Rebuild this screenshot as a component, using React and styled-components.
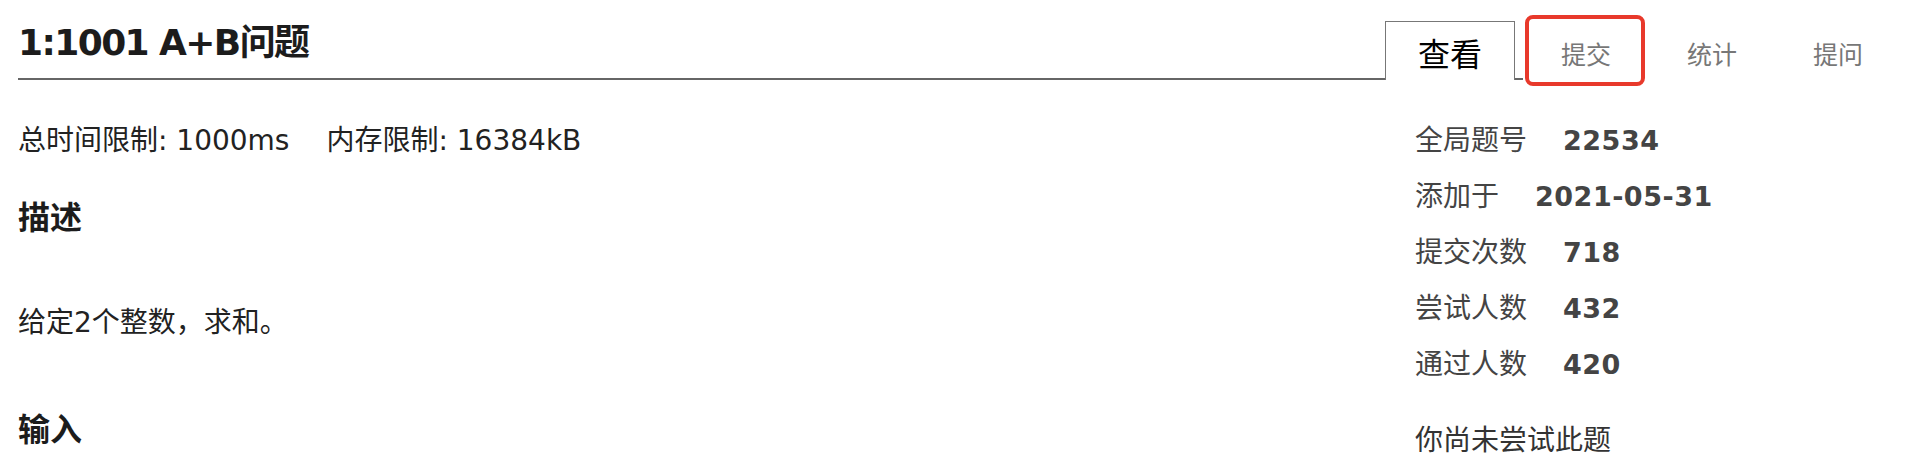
import styled, { createGlobalStyle } from 'styled-components'

const GlobalStyle = createGlobalStyle`
  body {
    margin: 0;
    background: #fff;
    color: #222;
    font-family: "Noto Sans", "Noto Sans CJK SC", sans-serif;
  }
`

const latin = '"DejaVu Sans", "Noto Sans CJK SC", sans-serif'

const tabs = [
  { label: '查看', active: true },
  { label: '提交', marked: true },
  { label: '统计' },
  { label: '提问' },
]

const stats = [
  ['全局题号', '22534'],
  ['添加于', '2021-05-31'],
  ['提交次数', '718'],
  ['尝试人数', '432'],
  ['通过人数', '420'],
]

export default function App() {
  return (
    <Page>
      <GlobalStyle />
      <Header>
        <Title>1:1001 A+B问题</Title>
        <TabList>
          {tabs.map(tab => (
            <Tab key={tab.label} $active={tab.active}>
              {tab.label}
              {tab.marked ? <Mark /> : null}
            </Tab>
          ))}
        </TabList>
      </Header>
      <Main>
        <Content>
          <Limits>
            <span>总时间限制: 1000ms</span>
            <span>内存限制: 16384kB</span>
          </Limits>
          <SectionTitle>描述</SectionTitle>
          <Text>给定2个整数，求和。</Text>
          <SectionTitle $gap>输入</SectionTitle>
        </Content>
        <Side>
          {stats.map(([label, value]) => (
            <StatRow key={label}>
              {label}
              <StatValue>{value}</StatValue>
            </StatRow>
          ))}
          <Status>你尚未尝试此题</Status>
        </Side>
      </Main>
    </Page>
  )
}

const Page = styled.div`
  padding: 0 40px 0 18px;
  height: 474px;
  overflow: hidden;
  box-sizing: border-box;
`
const Header = styled.header`
  display: flex;
  align-items: flex-end;
  height: 78px;
  border-bottom: 2px solid #666;
`
const Title = styled.h1`
  flex: 1;
  margin: 0 0 17px 0;
  font-family: ${latin};
  font-size: 36px;
  line-height: 36px;
  font-weight: 700;
  letter-spacing: -1.6px;
  color: #1c1c1c;
`
const TabList = styled.ul`
  display: flex;
  flex-shrink: 0;
  align-items: flex-end;
  width: 516px;
  margin: 0 -19px -2px 0;
  padding: 0;
  list-style: none;
`
const Tab = styled.li`
  position: relative;
  display: flex;
  align-items: center;
  justify-content: center;
  box-sizing: border-box;
  height: 59px;
  padding: ${props => props.$active ? '2px 0 0' : '4px 38px 0'};
  width: ${props => props.$active ? '130px' : 'auto'};
  margin-right: ${props => props.$active ? '8px' : '0'};
  background: #fff;
  border: ${props => props.$active ? '1px solid #777' : 'none'};
  border-bottom: none;
  font-size: ${props => props.$active ? '32px' : '25px'};
  color: ${props => props.$active ? '#000' : '#777'};
`
const Mark = styled.span`
  position: absolute;
  top: -6px;
  left: 2px;
  right: 4px;
  bottom: -6px;
  border: 4px solid #e8392b;
  border-radius: 8px;
`
const Main = styled.main`
  display: flex;
`
const Content = styled.div`
  flex: 1;
`
const Limits = styled.p`
  display: flex;
  gap: 37px;
  margin: 41px 0 0;
  font-family: ${latin};
  font-size: 28px;
  line-height: 40px;
`
const SectionTitle = styled.h2`
  margin: ${props => props.$gap ? '64px' : '34px'} 0 0;
  font-size: 32px;
  line-height: 44px;
  font-weight: 700;
  color: #1c1c1c;
`
const Text = styled.p`
  margin: 64px 0 0;
  font-family: ${latin};
  font-size: 28px;
  line-height: 40px;
`
const Side = styled.aside`
  width: 497px;
  padding: 31px 0 0 30px;
  box-sizing: border-box;
  color: #444;
`
const StatRow = styled.div`
  font-size: 28px;
  line-height: 56px;
`
const StatValue = styled.span`
  margin-left: 36px;
  font-family: "DejaVu Sans", sans-serif;
  font-size: 27px;
  line-height: 1;
  font-weight: 700;
  letter-spacing: 0.5px;
  color: #444;
`
const Status = styled.p`
  margin: 20px 0 0;
  font-size: 28px;
  line-height: 56px;
  color: #333;
`
